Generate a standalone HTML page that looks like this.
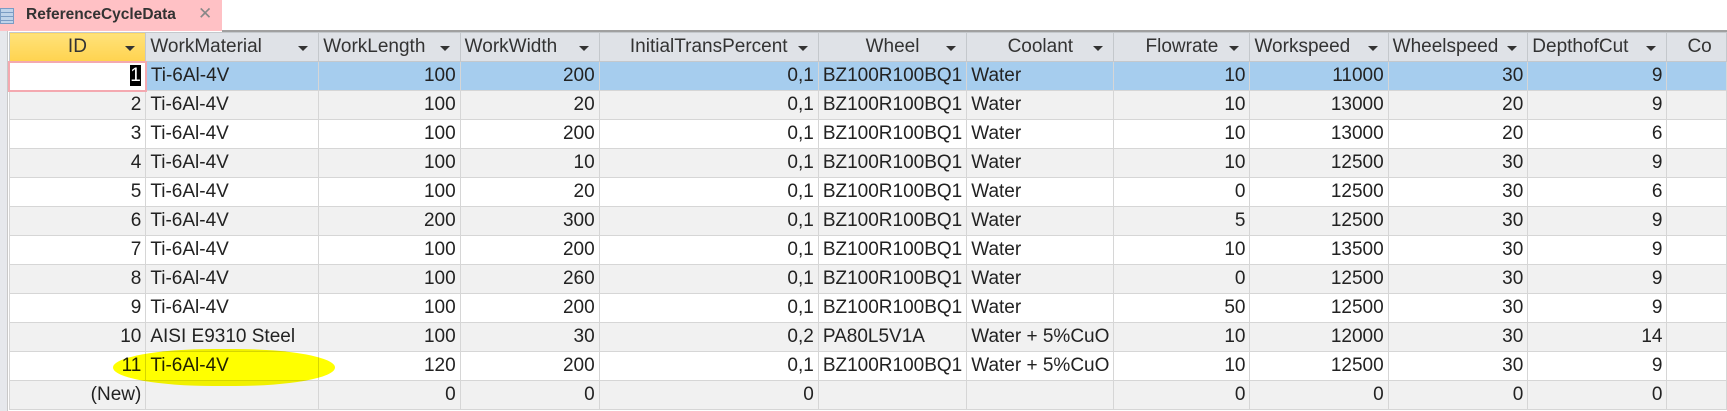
<!DOCTYPE html><html><head><style>
body{margin:0;width:1727px;height:411px;overflow:hidden;background:#fff;font-family:"Liberation Sans",sans-serif;position:relative}
.tab{position:absolute;left:0;top:0;width:222px;height:31px;background:#ffc1c5}
.tab b{position:absolute;left:26px;top:6px;font-size:15.5px;color:#333}
.tab .x{position:absolute;left:198px;top:4px;font-size:17px;color:#888}
.tab .ic{position:absolute;left:0;top:8px;width:12px;height:14px;border:1px solid #7b9cc4;background:repeating-linear-gradient(#bfd3ea 0 3px,#7b9cc4 3px 4px)}
.topline{position:absolute;left:222px;top:30px;right:0;height:2px;background:#a0a0a0}
.sel{position:absolute;left:0;top:31px;width:7px;height:380px;background:#e6e8ec;border-right:1px solid #c8c8c8}
table{position:absolute;left:8px;top:32px;border-collapse:collapse;table-layout:fixed;font-size:19px;color:#222}
td,th{height:29px;padding:0 4px;border:1px solid #d6d6d6;white-space:nowrap;overflow:hidden;box-sizing:border-box}
th{font-weight:normal;background:#dfe2e7;color:#333;height:29px;border-color:#c4c8cc;position:relative;text-align:center}
th.l{text-align:left}
th::after{content:"";position:absolute;right:10px;top:13px;border:5px solid transparent;border-top:5px solid #333;border-bottom:0}
th.n::after{display:none}
th.id{background:linear-gradient(#ffe27a,#ffd34f)}
td{text-align:right}
td.t{text-align:left}
tr.g td{background:#f1f1f1}
tr.s td{background:#a6cdee}
tr.s td.c1{background:#fff;border:2px solid #f4a9b0}
.k{background:#000;color:#fff}
.hl{position:absolute;left:113px;top:349px;width:222px;height:37px;background:#ffff00;border-radius:45%/50%;mix-blend-mode:multiply;z-index:5}
</style></head><body>
<div class="tab"><span class="ic"></span><b>ReferenceCycleData</b><span class="x">✕</span></div>
<div class="topline"></div>
<div class="sel"></div>
<table>
<colgroup><col style="width:141px"><col style="width:174px"><col style="width:143px"><col style="width:141px"><col style="width:222px"><col style="width:145px"><col style="width:143px"><col style="width:139px"><col style="width:140px"><col style="width:141px"><col style="width:141px"><col style="width:60px"></colgroup>
<tr><th class="id">ID</th><th class="l">WorkMaterial</th><th class="l">WorkLength</th><th class="l">WorkWidth</th><th>InitialTransPercent</th><th>Wheel</th><th>Coolant</th><th>Flowrate</th><th class="l">Workspeed</th><th class="l">Wheelspeed</th><th class="l">DepthofCut</th><th class="n l" style="padding-left:20px">Co</th></tr>
<tr class="s"><td class="c1"><span class="k">1</span></td><td class="t">Ti-6Al-4V</td><td>100</td><td>200</td><td>0,1</td><td class="t">BZ100R100BQ1</td><td class="t">Water</td><td>10</td><td>11000</td><td>30</td><td>9</td><td></td></tr>
<tr class="g"><td>2</td><td class="t">Ti-6Al-4V</td><td>100</td><td>20</td><td>0,1</td><td class="t">BZ100R100BQ1</td><td class="t">Water</td><td>10</td><td>13000</td><td>20</td><td>9</td><td></td></tr>
<tr><td>3</td><td class="t">Ti-6Al-4V</td><td>100</td><td>200</td><td>0,1</td><td class="t">BZ100R100BQ1</td><td class="t">Water</td><td>10</td><td>13000</td><td>20</td><td>6</td><td></td></tr>
<tr class="g"><td>4</td><td class="t">Ti-6Al-4V</td><td>100</td><td>10</td><td>0,1</td><td class="t">BZ100R100BQ1</td><td class="t">Water</td><td>10</td><td>12500</td><td>30</td><td>9</td><td></td></tr>
<tr><td>5</td><td class="t">Ti-6Al-4V</td><td>100</td><td>20</td><td>0,1</td><td class="t">BZ100R100BQ1</td><td class="t">Water</td><td>0</td><td>12500</td><td>30</td><td>6</td><td></td></tr>
<tr class="g"><td>6</td><td class="t">Ti-6Al-4V</td><td>200</td><td>300</td><td>0,1</td><td class="t">BZ100R100BQ1</td><td class="t">Water</td><td>5</td><td>12500</td><td>30</td><td>9</td><td></td></tr>
<tr><td>7</td><td class="t">Ti-6Al-4V</td><td>100</td><td>200</td><td>0,1</td><td class="t">BZ100R100BQ1</td><td class="t">Water</td><td>10</td><td>13500</td><td>30</td><td>9</td><td></td></tr>
<tr class="g"><td>8</td><td class="t">Ti-6Al-4V</td><td>100</td><td>260</td><td>0,1</td><td class="t">BZ100R100BQ1</td><td class="t">Water</td><td>0</td><td>12500</td><td>30</td><td>9</td><td></td></tr>
<tr><td>9</td><td class="t">Ti-6Al-4V</td><td>100</td><td>200</td><td>0,1</td><td class="t">BZ100R100BQ1</td><td class="t">Water</td><td>50</td><td>12500</td><td>30</td><td>9</td><td></td></tr>
<tr class="g"><td>10</td><td class="t">AISI E9310 Steel</td><td>100</td><td>30</td><td>0,2</td><td class="t">PA80L5V1A</td><td class="t">Water + 5%CuO</td><td>10</td><td>12000</td><td>30</td><td>14</td><td></td></tr>
<tr><td>11</td><td class="t">Ti-6Al-4V</td><td>120</td><td>200</td><td>0,1</td><td class="t">BZ100R100BQ1</td><td class="t">Water + 5%CuO</td><td>10</td><td>12500</td><td>30</td><td>9</td><td></td></tr>
<tr class="g"><td>(New)</td><td></td><td>0</td><td>0</td><td>0</td><td></td><td></td><td>0</td><td>0</td><td>0</td><td>0</td><td></td></tr>
</table>
<div class="hl"></div>
</body></html>
